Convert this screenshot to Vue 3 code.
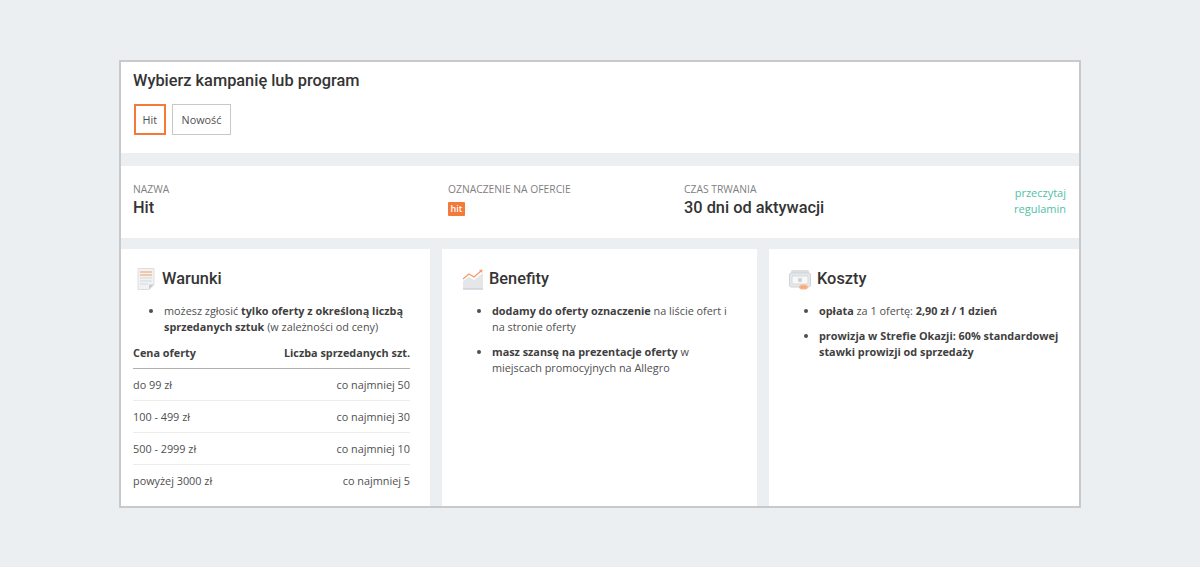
<script setup>
const rows = [
  ['do 99 zł', 'co najmniej 50'],
  ['100 - 499 zł', 'co najmniej 30'],
  ['500 - 2999 zł', 'co najmniej 10'],
  ['powyżej 3000 zł', 'co najmniej 5'],
]
</script>

<template>
  <div class="page">
    <main class="box">
      <section class="picker">
        <h1>Wybierz kampanię lub program</h1>
        <div class="tabs">
          <button class="tab active">Hit</button>
          <button class="tab">Nowość</button>
        </div>
      </section>

      <section class="summary">
        <div class="col c1">
          <div class="label">NAZWA</div>
          <div class="value">Hit</div>
        </div>
        <div class="col c2">
          <div class="label">OZNACZENIE NA OFERCIE</div>
          <span class="badge">hit</span>
        </div>
        <div class="col c3">
          <div class="label">CZAS TRWANIA</div>
          <div class="value">30 dni od aktywacji</div>
        </div>
        <a class="rules">przeczytaj<br />regulamin</a>
      </section>

      <section class="cards">
        <article class="card first">
          <header class="head">
            <svg width="22" height="24" viewBox="0 0 22 24">
              <path d="M2 1.500h16v16l-5 5H2z" fill="#f1f2f3" stroke="#dcdfe2" />
              <path d="M4 5h12M4 8h12" stroke="#f79a63" stroke-width="1.200" />
              <path d="M4 11h12M4 14h12M4 17h8" stroke="#d5d8dc" stroke-width="1.200" />
              <path d="M13 22.500v-5h5z" fill="#c9cdd1" />
            </svg>
            <h2>Warunki</h2>
          </header>
          <ul class="list tight">
            <li>możesz zgłosić <b>tylko oferty z określoną liczbą sprzedanych sztuk</b> (w zależności od ceny)</li>
          </ul>
          <div class="thead"><span>Cena oferty</span><span>Liczba sprzedanych szt.</span></div>
          <div v-for="r in rows" :key="r[0]" class="row"><span>{{ r[0] }}</span><span>{{ r[1] }}</span></div>
        </article>

        <article class="card second">
          <header class="head">
            <svg width="22" height="24" viewBox="0 0 22 24">
              <path d="M1 22V14l6-4 5 3 9-7v16z" fill="#e4e6e9" />
              <path d="M1 22h20" stroke="#cfd2d6" stroke-width="1.500" />
              <path d="M1 12l6-5 5 3 7-6" fill="none" stroke="#f79a63" stroke-width="1.200" />
              <path d="M17 3l3.500-.5L20 6z" fill="#f79a63" />
            </svg>
            <h2>Benefity</h2>
          </header>
          <ul class="list">
            <li><b>dodamy do oferty oznaczenie</b> na liście ofert i na stronie oferty</li>
            <li><b>masz szansę na prezentacje oferty</b> w miejscach promocyjnych na Allegro</li>
          </ul>
        </article>

        <article class="card third">
          <header class="head">
            <svg width="22" height="24" viewBox="0 0 22 24">
              <path d="M2 7V4.500A1.500 1.500 0 0 1 3.500 3h15A1.500 1.500 0 0 1 20 4.500V7z" fill="#dcdfe2" />
              <rect x="0.500" y="6" width="21" height="14" rx="2" fill="#e6e8ea" stroke="#cfd2d6" />
              <rect x="3" y="9" width="16" height="8" rx="1" fill="#f8f8f9" stroke="#d5d8dc" />
              <circle cx="11" cy="13" r="2.200" fill="#d0d3d7" />
              <ellipse cx="14.500" cy="20" rx="4.500" ry="2.600" fill="#f9b48d" />
              <path d="M12.500 20h1M15.500 20h1" stroke="#ef7f45" />
            </svg>
            <h2>Koszty</h2>
          </header>
          <ul class="list">
            <li><b>opłata</b> za 1 ofertę: <b>2,90 zł / 1 dzień</b></li>
            <li><b>prowizja w Strefie Okazji: 60% standardowej stawki prowizji od sprzedaży</b></li>
          </ul>
        </article>
      </section>
    </main>
  </div>
</template>

<style>
html, body { margin: 0; background: #eceff2; }
</style>

<style scoped>
.page {
  height: 567px;
  padding: 60px 119px 0;
  box-sizing: border-box;
  background: #eceff2;
  font-family: "Open Sans", "Liberation Sans", sans-serif;
  font-size: 10.85px;
  color: #4f4f4f;
}
.box {
  width: 962px;
  height: 448px;
  box-sizing: border-box;
  border: 2px solid #c9c9c9;
  display: flex;
  flex-direction: column;
  gap: 12px;
  background: #eceff2;
}
.picker {
  height: 91px;
  flex: none;
  box-sizing: border-box;
  background: #fff;
  padding: 9px 12px 0;
}
h1, h2 {
  margin: 0;
  font-family: Roboto, "Liberation Sans", sans-serif;
  font-weight: 500;
  color: #343434;
}
h1 { font-size: 16.35px; line-height: 20px; }
.tabs { display: flex; gap: 6px; margin: 13px 0 0 1px; }
.tab {
  height: 31px;
  box-sizing: border-box;
  padding: 0 9px;
  background: #fff;
  border: 1px solid #c8c8c8;
  font: 10.8px "Open Sans", sans-serif;
  color: #4f4f4f;
}
.tab.active { border: 2px solid #f4793a; padding: 0 6.5px; }
.summary {
  height: 72px;
  flex: none;
  margin-top: 1px;
  box-sizing: border-box;
  background: #fff;
  display: flex;
  padding: 16px 13px 0 12px;
}
.c1 { width: 315px; }
.c2 { width: 236px; }
.c3 { flex: 1; }
.label { font-size: 10.3px; line-height: 14px; color: #7f7f7f; }
.value {
  font: 500 16.35px/20px Roboto, "Liberation Sans", sans-serif;
  color: #343434;
  margin-top: 2px;
}
.badge {
  display: block;
  width: 17px;
  height: 14px;
  margin-top: 6px;
  border-radius: 1px;
  background: #f4793a;
  color: #fff;
  font-size: 9px;
  font-weight: 600;
  line-height: 14px;
  text-align: center;
}
.rules {
  color: #4fbfa8;
  text-align: right;
  line-height: 16px;
  font-size: 11px;
  margin-top: 3px;
}
.cards {
  flex: 1;
  min-height: 0;
  margin-top: -1px;
  display: flex;
  gap: 12px;
}
.card { background: #fff; box-sizing: border-box; }
.first { width: 309px; padding: 0 20px 0 12px; }
.second { width: 315px; padding: 0 20px; }
.third { flex: 1; padding: 0 20px; }
.head {
  display: flex;
  align-items: center;
  gap: 5px;
  height: 24px;
  margin-top: 18px;
}
.first .head { padding-left: 3px; gap: 4px; }
.third .head { gap: 6px; }
h2 { font-size: 16.35px; line-height: 24px; }
.list {
  margin: 12px 0 0;
  padding: 0 0 0 30px;
  line-height: 16px;
}
.second .list, .third .list { margin-right: -2px; }
.list li + li { margin-top: 9px; }
.list b { font-weight: 700; color: #3f3f3f; }
.first .list { padding-left: 31px; margin-right: -4px; }
.thead, .row {
  display: flex;
  justify-content: space-between;
  align-items: center;
}
.thead {
  height: 34px;
  padding-top: 2px;
  border-bottom: 1px solid #b0b0b0;
  font-weight: 700;
  color: #3f3f3f;
  box-sizing: border-box;
}
.row {
  height: 32px;
  box-sizing: border-box;
  border-bottom: 1px solid #ececec;
}
.row:last-child { border-bottom-color: transparent; }
</style>
